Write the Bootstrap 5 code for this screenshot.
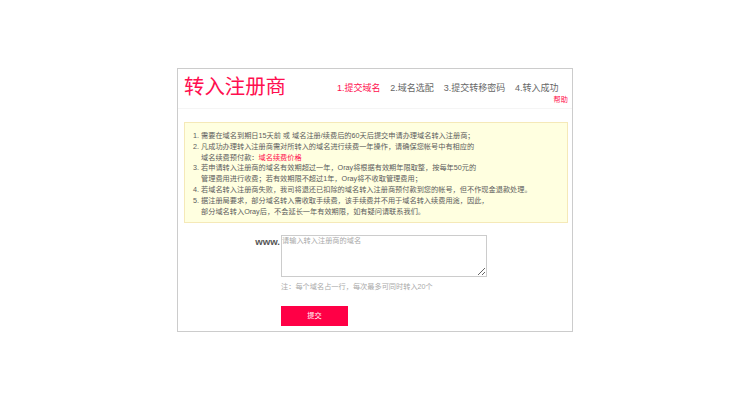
<!DOCTYPE html>
<html lang="zh">
<head>
<meta charset="utf-8">
<title>转入注册商</title>
<link href="https://cdn.jsdelivr.net/npm/bootstrap@5.3.0/dist/css/bootstrap.min.css" rel="stylesheet">
<style>
html,body{height:100%}
body{font-family:"Liberation Sans","Noto Sans CJK SC",sans-serif;background:#fff;color:#666;overflow:hidden}
.stage{padding-top:68px}
.panel{width:396px;height:264px;border:1px solid #ccc;background:#fff}
.head{height:40px;border-bottom:1px solid #f5f5f5;padding:0 4px 0 6px}
.ttl{font-size:20.4px;line-height:30px;color:#ff0f4f;margin:0;font-weight:400;padding-top:3px}
.steps{font-size:9px;line-height:12px;color:#666;gap:9.8px;padding-top:13px;padding-right:9.5px}
.steps .on{color:#ff0f4f}
.help{font-size:7.2px;line-height:10px;color:#ff0f4f;text-decoration:none;margin-top:1px}
.notice{margin:13px 4px 0 6px;height:101px;background:#ffffe0;border:1px solid #f5e9b8;font-size:7.2px;line-height:10.8px;color:#5c5c5c;padding:8px 0 0 6px}
.notice ol{margin:0;padding-left:10px}
.notice a{color:#ff0f4f;text-decoration:none}
.form-zone{margin-top:12px;padding-left:77px}
.pre{font-size:9.6px;font-weight:700;color:#555;width:26px;line-height:12px;padding:1px 1px 0 0;text-align:right;white-space:nowrap}
.ta{width:206px;height:42px;border:1px solid #ccc;font-size:7.2px;line-height:10px;padding:0;display:block;border-radius:0;outline:0;flex:none}
.ta::placeholder{color:#aaa}
.tip{font-size:7.2px;line-height:10px;color:#aaa;margin:5px 0 0 26px}
.go{width:67px;height:20px;margin:14px 0 0 26px;background:#ff0046;border:0;border-radius:0;color:#fff;font-size:7.2px;line-height:20px;padding:0;display:block}
</style>
</head>
<body>
<div class="stage d-flex justify-content-center">
  <div class="panel">
    <div class="head d-flex justify-content-between">
      <h1 class="ttl">转入注册商</h1>
      <div class="d-flex flex-column align-items-end">
        <div class="steps d-flex">
          <span class="on">1.提交域名</span><span>2.域名选配</span><span>3.提交转移密码</span><span>4.转入成功</span>
        </div>
        <a class="help" href="#">帮助</a>
      </div>
    </div>
    <div class="notice">
      <ol>
        <li>需要在域名到期日15天前 或 域名注册/续费后的60天后提交申请办理域名转入注册商；</li>
        <li>凡成功办理转入注册商需对所转入的域名进行续费一年操作，请确保您帐号中有相应的<br>域名续费预付款：<a href="#">域名续费价格</a></li>
        <li>若申请转入注册商的域名有效期超过一年，Oray将根据有效期年限取整，按每年50元的<br>管理费用进行收费；若有效期限不超过1年，Oray将不收取管理费用；</li>
        <li>若域名转入注册商失败，我司将退还已扣除的域名转入注册商预付款到您的帐号，但不作现金退款处理。</li>
        <li>据注册局要求，部分域名转入需收取手续费，该手续费并不用于域名转入续费用途，因此，<br>部分域名转入Oray后，不会延长一年有效期限，如有疑问请联系我们。</li>
      </ol>
    </div>
    <div class="form-zone">
      <div class="d-flex">
        <div class="pre">www.</div>
        <textarea class="ta form-control" placeholder="请输入转入注册商的域名"></textarea>
      </div>
      <p class="tip">注：每个域名占一行，每次最多可同时转入20个</p>
      <button class="go btn" type="button">提交</button>
    </div>
  </div>
</div>
<script src="https://cdn.jsdelivr.net/npm/bootstrap@5.3.0/dist/js/bootstrap.bundle.min.js"></script>
</body>
</html>
